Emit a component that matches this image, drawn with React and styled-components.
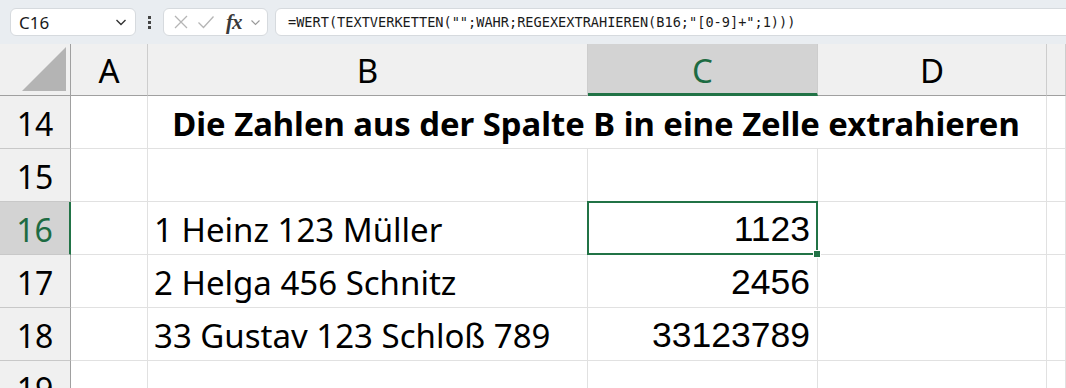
import React from "react";
import styled, { createGlobalStyle, css } from "styled-components";

const GREEN = "#217346";
const SANS = `"Noto Sans", "Open Sans", sans-serif`;

const GlobalStyle = createGlobalStyle`
  body {
    margin: 0;
    background: #fff;
    overflow: hidden;
  }
`;

const columns = ["A", "B", "C", "D", ""];

const rows = [
  { n: 14, title: "Die Zahlen aus der Spalte B in eine Zelle extrahieren" },
  { n: 15 },
  { n: 16, text: "1 Heinz 123 Müller", value: "1123", selected: true },
  { n: 17, text: "2 Helga 456 Schnitz", value: "2456" },
  { n: 18, text: "33 Gustav 123 Schloß 789", value: "33123789" },
  { n: 19 },
];

const App = () => {
  return (
    <>
      <GlobalStyle />
      <Bar>
        <NameBox>
          <span>C16</span>
          <Chevron width="14" height="14" viewBox="0 0 14 14">
            <path d="M2.5 5 L7 9.5 L11.5 5" />
          </Chevron>
        </NameBox>
        <Kebab>
          <i />
          <i />
          <i />
        </Kebab>
        <FxBox>
          <svg width="16" height="16" viewBox="0 0 16 16">
            <path d="M2 2 L14 14 M14 2 L2 14" stroke="#b5b5b5" strokeWidth="1.3" fill="none" />
          </svg>
          <svg width="18" height="16" viewBox="0 0 18 16">
            <path d="M1.5 8.5 L6.5 13.5 L16.5 2.5" stroke="#b5b5b5" strokeWidth="1.3" fill="none" />
          </svg>
          <Fx>fx</Fx>
          <SmallChevron width="11" height="11" viewBox="0 0 11 11">
            <path d="M1.5 3.5 L5.5 7.5 L9.5 3.5" />
          </SmallChevron>
        </FxBox>
        <FormulaInput>
          =WERT(TEXTVERKETTEN("";WAHR;REGEXEXTRAHIEREN(B16;"[0-9]+";1)))
        </FormulaInput>
      </Bar>
      <Sheet>
        <Corner>
          <svg width="45" height="45" viewBox="0 0 45 45">
            <path d="M0 44 L44 0 L44 44 Z" fill="#b4b4b4" />
          </svg>
        </Corner>
        {columns.map((c, i) => (
          <ColHead key={i} $selected={c === "C"}>
            {c}
          </ColHead>
        ))}
        {rows.map((r) => (
          <React.Fragment key={r.n}>
            <RowHead $selected={r.selected}>{r.n}</RowHead>
            <Cell />
            {r.title ? (
              <Cell $span={3} $center $bold>
                {r.title}
              </Cell>
            ) : (
              <>
                <Cell>{r.text}</Cell>
                <NumCell $selected={r.selected}>{r.value}</NumCell>
                <Cell />
              </>
            )}
            <Cell />
          </React.Fragment>
        ))}
      </Sheet>
    </>
  );
};

export default App;

const Bar = styled.div`
  display: flex;
  align-items: center;
  height: 44px;
  padding-left: 10px;
  background: #e9edf1;
  box-sizing: border-box;
`;

const Box = styled.div`
  height: 28px;
  box-sizing: border-box;
  background: #fff;
  border: 1px solid #d6dade;
  border-radius: 6px;
  display: flex;
  align-items: center;
`;

const NameBox = styled(Box)`
  width: 126px;
  justify-content: space-between;
  padding: 0 7px 0 8px;
  font-family: ${SANS};
  font-size: 17px;
  color: #1a1a1a;
`;

const Chevron = styled.svg`
  path {
    fill: none;
    stroke: #333;
    stroke-width: 1.4;
  }
`;

const SmallChevron = styled.svg`
  path {
    fill: none;
    stroke: #9a9a9a;
    stroke-width: 1.1;
  }
`;

const Kebab = styled.div`
  width: 27px;
  display: flex;
  flex-direction: column;
  align-items: center;
  gap: 2px;
  i {
    width: 3px;
    height: 3px;
    background: #444;
  }
`;

const FxBox = styled(Box)`
  width: 105px;
  padding: 0 4px 0 9px;
  gap: 8px;
`;

const Fx = styled.span`
  font-family: "Liberation Serif", "DejaVu Serif", serif;
  font-style: italic;
  font-weight: bold;
  font-size: 21px;
  color: #3a3a3a;
  margin-left: 3px;
  letter-spacing: -1px;
`;

const FormulaInput = styled(Box)`
  flex: 1;
  margin-left: 7px;
  margin-right: -10px;
  padding-left: 12px;
  font-family: "DejaVu Sans Mono", "Liberation Mono", monospace;
  font-size: 13.6px;
  color: #1a1a1a;
  white-space: pre;
`;

const Sheet = styled.div`
  display: grid;
  grid-template-columns: 71px 77px 440px 230px 229px 1fr;
  grid-template-rows: 52px repeat(6, 53px);
  font-family: ${SANS};
`;

const headBase = css`
  background: #f0f0f0;
  box-sizing: border-box;
  display: flex;
  align-items: center;
  justify-content: center;
  color: #000;
`;

const Corner = styled.div`
  ${headBase};
  border-right: 1px solid #a0a0a0;
  border-bottom: 1px solid #a0a0a0;
  align-items: flex-end;
  justify-content: flex-end;
  padding: 0 3px 3px 0;
`;

const ColHead = styled.div`
  ${headBase};
  font-size: 33px;
  border-right: 1px solid #cdcdcd;
  border-bottom: 1px solid #a0a0a0;
  padding-top: 2px;
  ${(p) =>
    p.$selected &&
    css`
      background: #d3d3d3;
      color: #1d6b42;
      border-bottom: 3px solid ${GREEN};
      padding-top: 4px;
    `}
`;

const RowHead = styled.div`
  ${headBase};
  font-size: 32px;
  border-right: 1px solid #a0a0a0;
  border-bottom: 1px solid #c8c8c8;
  padding-top: 2px;
  ${(p) =>
    p.$selected &&
    css`
      background: #d3d3d3;
      color: #1d6b42;
      border-right: 2px solid ${GREEN};
    `}
`;

const Cell = styled.div`
  box-sizing: border-box;
  border-right: 1px solid #e1e1e1;
  border-bottom: 1px solid #e1e1e1;
  display: flex;
  align-items: center;
  padding: 3px 8px 0 6px;
  font-size: ${(p) => (p.$bold ? "32.8px" : "33px")};
  color: #000;
  white-space: nowrap;
  grid-column: span ${(p) => p.$span || 1};
  justify-content: ${(p) => (p.$center ? "center" : "flex-start")};
  font-weight: ${(p) => (p.$bold ? 700 : 400)};
`;

const NumCell = styled(Cell)`
  position: relative;
  justify-content: flex-end;
  font-family: "Liberation Sans", Arial, sans-serif;
  font-size: 35.5px;
  padding-right: 7px;
  ${(p) =>
    p.$selected &&
    css`
      &::after {
        content: "";
        position: absolute;
        left: -1px;
        top: -1px;
        right: -1px;
        bottom: -1px;
        border: 2px solid ${GREEN};
      }
      &::before {
        content: "";
        position: absolute;
        right: -4px;
        bottom: -4px;
        width: 6px;
        height: 6px;
        background: ${GREEN};
        border: 1px solid #fff;
        z-index: 1;
      }
    `}
`;
